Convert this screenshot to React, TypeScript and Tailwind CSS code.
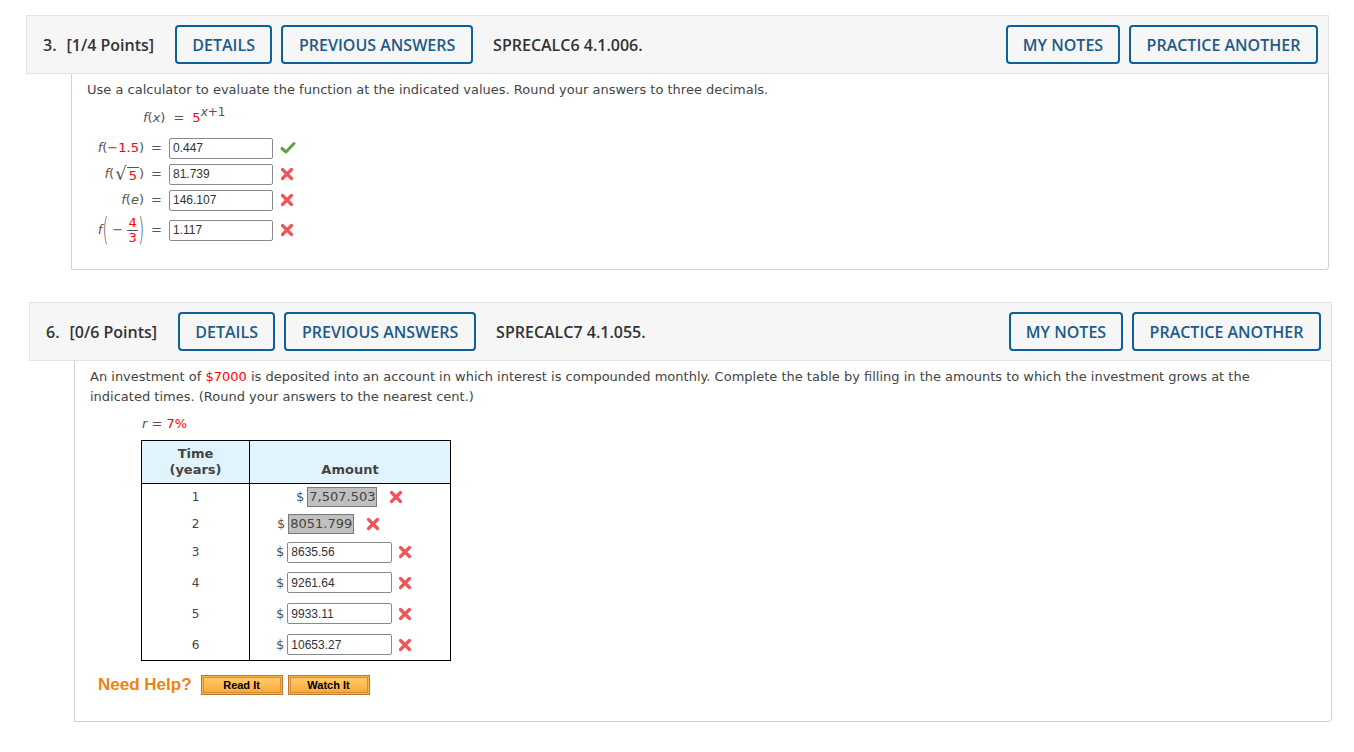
import React from 'react'

const sans = { fontFamily: '"Open Sans", "Noto Sans", sans-serif' }
const verdana = { fontFamily: '"DejaVu Sans", Verdana, sans-serif' }
const arial = { fontFamily: '"Liberation Sans", Arial, sans-serif' }

function Check() {
  return (
    <svg width="16" height="14" viewBox="0 0 16 14" className="shrink-0">
      <path d="M2 7.5 L6 11 L14 2.5" fill="none" stroke="#5aa545" strokeWidth="3" strokeLinecap="round" strokeLinejoin="round" />
    </svg>
  )
}

function Cross() {
  return (
    <svg width="14" height="14" viewBox="0 0 14 14" className="shrink-0">
      <path d="M2.5 2.5 L11.5 11.5 M11.5 2.5 L2.5 11.5" fill="none" stroke="#f0545a" strokeWidth="3.2" strokeLinecap="round" />
    </svg>
  )
}

function HeaderButton({ label, w }: { label: string; w: string }) {
  return (
    <div
      className={`${w} h-[39px] shrink-0 rounded-[4px] border-2 border-[#0d6199] flex items-center justify-center text-[16px] font-[550] text-[#1d5b8b] bg-[#f6f6f6]`}
    >
      {label}
    </div>
  )
}

function Header({ num, points, code }: { num: string; points: string; code: string }) {
  return (
    <div
      className="h-[59px] bg-[#f6f6f6] border border-[#e2e2e2] flex items-center pl-[16px] pr-[10px]"
      style={sans}
    >
      <span className="text-[16px] font-semibold text-[#333]">{num}</span>
      <span className="ml-[10px] text-[16px] font-semibold text-[#333]">{points}</span>
      <div className="ml-[21px] flex gap-[9px]">
        <HeaderButton label="DETAILS" w="w-[97px]" />
        <HeaderButton label="PREVIOUS ANSWERS" w="w-[192px]" />
      </div>
      <span className="ml-[20px] text-[16px] font-semibold text-[#333]">{code}</span>
      <div className="ml-auto flex gap-[9px]">
        <HeaderButton label="MY NOTES" w="w-[114px]" />
        <HeaderButton label="PRACTICE ANOTHER" w="w-[189px]" />
      </div>
    </div>
  )
}

function AnswerInput({ value, w = 'w-[104px]' }: { value: string; w?: string }) {
  return (
    <div
      className={`${w} h-[21px] border border-[#8a8a8a] rounded-[2px] bg-white flex items-center pl-[3px] text-[12px] text-[#333]`}
      style={arial}
    >
      {value}
    </div>
  )
}

function FRow({ label, value, ok, h = 'h-[26px]' }: { label: React.ReactNode; value: string; ok?: boolean; h?: string }) {
  return (
    <div className={`flex items-center ${h}`}>
      <div className="w-[57px] flex justify-end items-center text-[#555]">{label}</div>
      <div className="w-[25px] text-center text-[#555]">=</div>
      <AnswerInput value={value} />
      <div className="ml-[7px]">{ok ? <Check /> : <Cross />}</div>
    </div>
  )
}

function Gray({ value }: { value: string }) {
  return (
    <span className="inline-flex items-center h-[20px] px-[1px] bg-[#c0c0c0] border border-[#7a7a7a] text-[13px] text-[#444]" style={verdana}>
      {value}
    </span>
  )
}

const rows = [
  { t: '1', h: 'h-[26px]', kind: 'gray', v: '7,507.503', pl: 'pl-[46px]' },
  { t: '2', h: 'h-[27px]', kind: 'gray', v: '8051.799', pl: 'pl-[27px]' },
  { t: '3', h: 'h-[30px]', kind: 'input', v: '8635.56', pl: 'pl-[26px]' },
  { t: '4', h: 'h-[31px]', kind: 'input', v: '9261.64', pl: 'pl-[26px]' },
  { t: '5', h: 'h-[31px]', kind: 'input', v: '9933.11', pl: 'pl-[26px]' },
  { t: '6', h: 'h-[31px]', kind: 'input', v: '10653.27', pl: 'pl-[26px]' },
]

function HelpButton({ label }: { label: string }) {
  return (
    <div className="w-[82px] h-[20px] border border-[#b9772f] bg-[#fdb548] p-[1px]">
      <div
        className="h-full border border-[#d98c2c] bg-gradient-to-b from-[#ffcb6b] to-[#fba93a] flex items-center justify-center text-[11px] font-bold text-black"
        style={arial}
      >
        {label}
      </div>
    </div>
  )
}

export default function App() {
  return (
    <div className="w-[1354px] h-[752px] bg-white pt-[15px] overflow-hidden" style={verdana}>
      {/* question 3 */}
      <div className="ml-[26px] w-[1303px]">
        <Header num="3." points="[1/4 Points]" code="SPRECALC6 4.1.006." />
        <div className="ml-[45px] h-[196px] border-l border-r border-b border-[#d2d2d2] rounded-br-[4px] pt-[6px] pl-[15px] text-[13px] leading-[20px] text-[#444]">
          <p>Use a calculator to evaluate the function at the indicated values. Round your answers to three decimals.</p>
          <div className="mt-[8px] ml-[56px] flex items-baseline text-[#555]">
            <span><i>f</i>(<i>x</i>)</span>
            <span className="mx-[8px]">=</span>
            <span className="text-[#ff0000]">5</span>
            <span className="text-[12px] relative -top-[6px] text-[#555]"><i>x</i>+1</span>
          </div>
          <div className="mt-[7px]">
            <FRow
              label={<span><i>f</i>(<span className="text-[#ff0000]">−1.5</span>)</span>}
              value="0.447"
              ok
            />
            <FRow
              label={
                <span className="flex items-center">
                  <i>f</i>(
                  <span className="text-[18px] leading-[18px] ml-[1px]">√</span>
                  <span className="border-t border-[#555] leading-[15px] text-[#ff0000] px-[2px] mt-[1px]">5</span>)
                </span>
              }
              value="81.739"
            />
            <FRow label={<span><i>f</i>(<i>e</i>)</span>} value="146.107" />
            <FRow
              h="h-[34px]"
              label={
                <span className="flex items-center">
                  <i>f</i>
                  <span className="inline-block scale-y-[2.1] text-[15px] font-light">(</span>
                  <span className="mx-[4px]">−</span>
                  <span className="flex flex-col items-center text-[13px] leading-[14px] text-[#ff0000]">
                    <span>4</span>
                    <span className="w-[11px] border-t border-[#555]" />
                    <span>3</span>
                  </span>
                  <span className="inline-block scale-y-[2.1] text-[15px] font-light">)</span>
                </span>
              }
              value="1.117"
            />
          </div>
        </div>
      </div>

      {/* question 6 */}
      <div className="ml-[29px] w-[1303px] mt-[32px]">
        <Header num="6." points="[0/6 Points]" code="SPRECALC7 4.1.055." />
        <div className="ml-[45px] h-[361px] border-l border-r border-b border-[#d2d2d2] rounded-br-[4px] pt-[6px] pl-[15px] pr-[60px] text-[13px] leading-[20px] text-[#444]">
          <p>
            An investment of <span className="text-[#ff0000]">$7000</span> is deposited into an account in which interest is compounded monthly. Complete the table by filling in the amounts to which the investment grows at the indicated times. (Round your answers to the nearest cent.)
          </p>
          <div className="mt-[7px] ml-[52px] text-[#555]">
            <i>r</i> = <span className="text-[#ff0000]">7%</span>
          </div>
          <div className="mt-[6px] ml-[51px] w-[310px] border border-black">
            <div className="flex h-[43px] bg-[#e1f3fc] border-b border-black font-bold text-[#444] leading-[16px]">
              <div className="w-[108px] border-r border-black flex flex-col items-center justify-start pt-[5px]">
                <span>Time</span>
                <span>(years)</span>
              </div>
              <div className="flex-1 flex items-end justify-center pb-[5px]">Amount</div>
            </div>
            {rows.map((r) => (
              <div key={r.t} className={`flex ${r.h}`}>
                <div className="w-[108px] border-r border-black flex items-center justify-center text-[12px] text-[#444]">{r.t}</div>
                <div className={`flex-1 flex items-center ${r.pl} text-[13px] text-[#555]`}>
                  <span className="mr-[3px]">$</span>
                  {r.kind === 'gray' ? (
                    <>
                      <Gray value={r.v} />
                      <span className="ml-[12px]"><Cross /></span>
                    </>
                  ) : (
                    <>
                      <AnswerInput value={r.v} w="w-[105px]" />
                      <span className="ml-[6px]"><Cross /></span>
                    </>
                  )}
                </div>
              </div>
            ))}
          </div>
          <div className="mt-[14px] ml-[8px] flex items-center h-[20px]">
            <span className="text-[17px] font-bold text-[#ee8311] mr-[9px]" style={arial}>Need Help?</span>
            <HelpButton label="Read It" />
            <span className="w-[5px]" />
            <HelpButton label="Watch It" />
          </div>
        </div>
      </div>
    </div>
  )
}
